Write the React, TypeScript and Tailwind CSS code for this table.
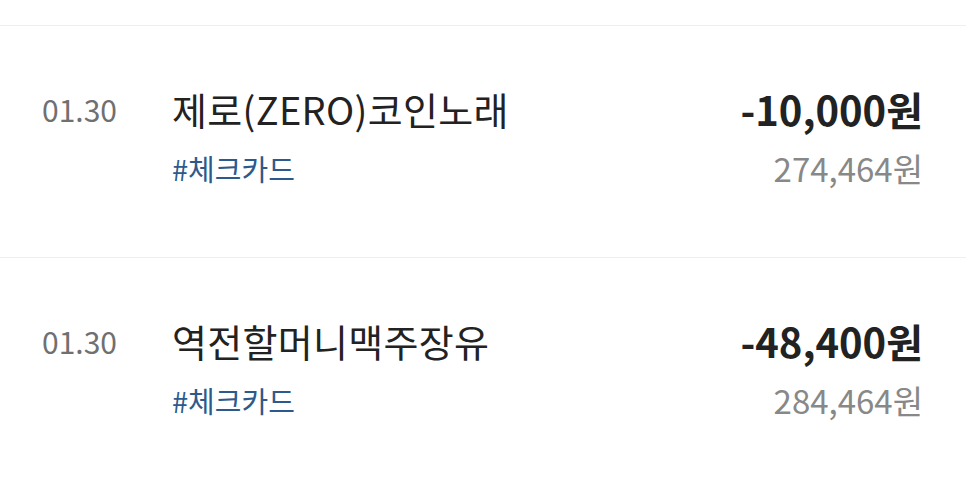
import React from "react";

const rows = [
  { date: "01.30", title: "제로(ZERO)코인노래", tag: "#체크카드", amount: "-10,000원", balance: "274,464원" },
  { date: "01.30", title: "역전할머니맥주장유", tag: "#체크카드", amount: "-48,400원", balance: "284,464원" },
];

export default function App() {
  return (
    <div
      className="w-[966px] h-[485px] bg-white overflow-hidden pt-[25px]"
      style={{ fontFamily: '"Noto Sans CJK KR", "Noto Sans", sans-serif' }}
    >
      {rows.map((r, i) => (
        <div key={i} className="border-t border-[#efefef] h-[232px] flex pl-[42px] pr-[43px] pt-[59px]">
          <div className="w-[130px] text-[30px] leading-[48px] text-[#707070]">{r.date}</div>
          <div className="flex-1 flex flex-col">
            <div className="text-[38px] leading-[48px] text-[#222] tracking-[0.3px]">{r.title}</div>
            <div className="mt-[15px] text-[29px] leading-[40px] text-[#2c5a8c]">{r.tag}</div>
          </div>
          <div className="flex flex-col items-end">
            <div className="text-[40px] leading-[48px] font-bold text-[#222]">{r.amount}</div>
            <div className="mt-[15px] text-[33px] leading-[40px] text-[#888]">{r.balance}</div>
          </div>
        </div>
      ))}
    </div>
  );
}
